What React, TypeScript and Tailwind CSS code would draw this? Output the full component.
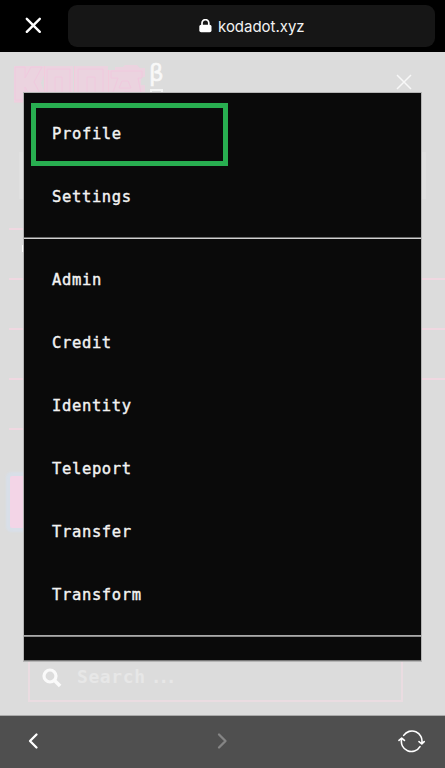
import React from 'react';

const accountItems = ['Profile', 'Settings'];
const toolItems = ['Admin', 'Credit', 'Identity', 'Teleport', 'Transfer', 'Transform'];

function MenuItem({ label, active = false }: { label: string; active?: boolean }) {
  return (
    <li
      className={
        active
          ? 'ml-[7px] flex h-[63px] w-[197px] items-center border-[5px] border-[#28ae50] pl-4'
          : 'flex h-[63px] items-center pl-7'
      }
    >
      <span className="font-['DejaVu_Sans_Mono',monospace] text-[15.5px] tracking-[0.64px] text-[#f3f3f3] [-webkit-text-stroke:0.4px_#f3f3f3]">
        {label}
      </span>
    </li>
  );
}

function Logo() {
  return (
    <svg width="133" height="40" viewBox="0 0 133 40" fill="none">
      <path
        d="M1 1h30v9l-3 8 3 8v11H1zM32 1h28v36H32zM62 1h33v36H62zM96 5h6V2h8l3-3h10l4 4h5v9h-4v8h4v12H96z"
        fill="#ebd3df"
      />
      <path
        d="M2 2h10v11l6-11h11l-8 15 9 17H19l-7-12v13H2zM34 4h23v29H34zM42 12h7v17h-7zM65 4h25v29H65zM74 12h8v17h-8zM98 6h31v7h-4l4 20h-9l-3-6h-6l-4 6h-9l7-20h-7zM109 16l-3 7h12l-3-7z"
        stroke="#f0c9de"
      />
      <path d="M1 37h94M31.5 1v35M61.5 1v35M95.5 5v31" stroke="#f2cbdc" />
    </svg>
  );
}

export default function App() {
  return (
    <div className="flex h-[768px] w-[445px] flex-col overflow-hidden bg-[#dcdcdc]">
      <header className="flex h-[52px] shrink-0 bg-black">
        <div className="flex w-[68px] shrink-0 items-center pb-px pl-[25px]">
          <svg width="17" height="17" viewBox="0 0 17 17" stroke="white" strokeWidth="2.4" strokeLinecap="round">
            <path d="M1.8 1.8 14.8 14.8M14.8 1.8 1.8 14.8" />
          </svg>
        </div>
        <div className="mt-[5px] flex h-[42px] w-[367px] items-center rounded-[9px] bg-[#161616] pl-[131px]">
          <svg width="13" height="14" viewBox="0 0 13 14">
            <rect x="0.3" y="5.8" width="12.2" height="7.4" rx="1.8" fill="white" />
            <path d="M3 7V4a3.4 3.4 0 0 1 6.8 0v3" fill="none" stroke="white" strokeWidth="1.7" />
          </svg>
          <span className="ml-[6px] mt-px font-['Inter',sans-serif] text-[15px] leading-5 tracking-[-0.02px] text-[#f2f2f2]">
            kodadot.xyz
          </span>
        </div>
      </header>

      <main className="grid h-[664px] shrink-0 grid-cols-1 grid-rows-1 overflow-hidden border-b border-[#aaa]">
        <div className="col-start-1 row-start-1 flex flex-col">
          <div className="flex h-[100px] items-start pl-[13px]">
            <div className="mt-[13px]">
              <Logo />
            </div>
            <div className="ml-[3px] mt-[6px] flex flex-col items-center">
              <span className="font-['DejaVu_Sans',sans-serif] text-[23px] leading-[30px] text-[#f8f8f8] [-webkit-text-stroke:0.6px_#f8f8f8]">
                β
              </span>
              <span className="mt-px h-[8px] w-[13px] border-2 border-[#f4f4f4]" />
            </div>
            <svg className="ml-auto mr-[33px] mt-[22px]" width="16" height="16" viewBox="0 0 16 16" stroke="#f8f8f8" strokeWidth="1.5">
              <path d="m1 1 14 14M15 1 1 15" />
            </svg>
          </div>
          <div className="mx-[19px] h-[47px] bg-[#e0e0e0]" />
          <div className="ml-[9px] mt-[29px] h-[2px] w-[200px] bg-[#f0d8e1]" />
          <div className="ml-[22px] mt-[15px] h-[7px] w-[8px] bg-white" />
          <div className="ml-[9px] mt-[26px] h-[2px] bg-[#f0d8e1]" />
          <div className="ml-[9px] mt-[48px] h-[2px] bg-[#f0d8e1]" />
          <div className="ml-[9px] mt-[48px] h-[2px] bg-[#f0d8e1]" />
          <div className="ml-[9px] mt-[48px] h-[2px] w-[200px] bg-[#f0d8e1]" />
          <div className="ml-[10px] mt-[46px] h-[52px] w-[180px] rounded-[2px] bg-[#f3d5e7] shadow-[0_0_2px_4px_#d8dfe8]" />
          <div className="ml-[28px] mt-[93px] flex h-[81px] w-[375px] items-end border-2 border-[#eadce1] pb-[12px] pl-[12px]">
            <svg width="20" height="20" viewBox="0 0 20 20" fill="none" stroke="#fafafa">
              <circle cx="8" cy="8" r="6" strokeWidth="3.2" />
              <path d="m12.3 12.3 5.8 5.8" strokeWidth="3.6" />
            </svg>
            <span className="ml-[15px] font-['DejaVu_Sans_Mono',monospace] text-[18px] font-bold leading-[23px] tracking-[0.6px] text-[#e7e7e7]">
              Search
            </span>
            <span className="ml-[5px] font-['DejaVu_Sans_Mono',monospace] text-[18px] font-bold leading-[23px] tracking-[-3.3px] text-[#e7e7e7]">
              ...
            </span>
          </div>
        </div>

        <nav className="z-10 col-start-1 row-start-1 ml-[24px] mt-[41px] h-[568px] w-[397px] overflow-hidden border-b border-[#777] bg-[#0a0a0a] shadow-[0_0_0_1px_#b5b5b5]">
          <ul className="pt-[10px]">
            {accountItems.map((label, i) => (
              <MenuItem key={label} label={label} active={i === 0} />
            ))}
          </ul>
          <div className="mt-[8px] h-[2px] border-b border-[#d0d0d0] bg-[#6b6b6b]" />
          <ul className="mt-[10px]">
            {toolItems.map((label) => (
              <MenuItem key={label} label={label} />
            ))}
          </ul>
          <div className="mt-[8px] h-[2px] border-b border-[#8b8b8b] bg-[#aaa]" />
        </nav>
      </main>

      <footer className="flex h-[52px] shrink-0 items-center bg-[#4f4f4f] pb-[2px]">
        <svg className="ml-[26px]" width="13" height="18" viewBox="0 0 13 18" fill="none" stroke="white" strokeWidth="2.3" strokeLinecap="round" strokeLinejoin="round">
          <path d="M10.5 2.5 4 9l6.5 6.5" />
        </svg>
        <svg className="ml-[177px]" width="13" height="18" viewBox="0 0 13 18" fill="none" stroke="#858585" strokeWidth="2.3" strokeLinecap="round" strokeLinejoin="round">
          <path d="M3 2.5 9.5 9 3 15.5" />
        </svg>
        <svg className="ml-auto mr-[20px]" width="27" height="24" viewBox="0 0 27 24" fill="none" stroke="white" strokeWidth="1.6" strokeLinecap="round" strokeLinejoin="round">
          <path d="M5.7 6.4A10 10 0 0 1 23.8 14M21 12.6l2.8 2.4 2.4-2.4M22 17.6A10 10 0 0 1 3.7 10M1 11.4 3.7 9l2.7 2.4" />
        </svg>
      </footer>
    </div>
  );
}
